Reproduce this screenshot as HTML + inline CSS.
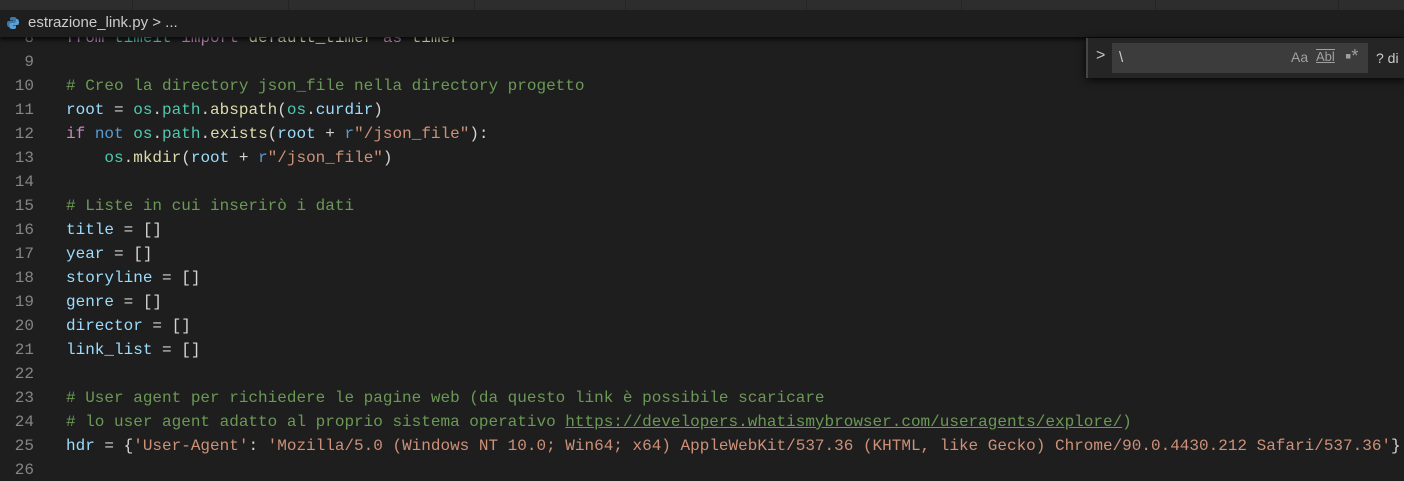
<!DOCTYPE html>
<html><head><meta charset="utf-8"><style>
html,body{margin:0;width:1404px;height:481px;background:#1e1e1e;overflow:hidden}
body{position:relative;font-family:"Liberation Mono",monospace}
.tabs{position:absolute;left:0;top:0;width:1404px;height:10px;background:#2d2d2d}
.tabs i{position:absolute;top:0;width:1px;height:10px;background:#252526}
.bc{position:absolute;left:0;top:10px;width:1404px;height:27px;background:#1e1e1e;font-family:"Liberation Sans",sans-serif;font-size:15px;color:#cccccc;box-shadow:0 3px 4px #000a;z-index:2}
.bc span{position:absolute;left:28px;top:4px}
.code{position:absolute;left:0;top:26px;width:1404px;height:455px;font-size:16px;line-height:24px;white-space:pre;color:#d4d4d4}
.ln{position:absolute;left:0;width:34px;text-align:right;color:#858585}
.l{position:absolute;left:66px}
.k{color:#c586c0}.b{color:#569cd6}.v{color:#9cdcfe}.c{color:#6a9955}.f{color:#dcdcaa}.s{color:#ce9178}.t{color:#4ec9b0}.u{text-decoration:underline}
.find{position:absolute;left:1086px;top:38px;width:318px;height:40px;background:#252526;border-left:2px solid #454545;box-shadow:0 2px 8px #000c;z-index:3;font-family:"Liberation Sans",sans-serif}
.inp{position:absolute;left:24px;top:5px;width:256px;height:30px;background:#3c3c3c}
</style></head><body>
<div class="tabs"><i style="left:132px"></i><i style="left:288px"></i><i style="left:474px"></i><i style="left:625px"></i><i style="left:806px"></i><i style="left:961px"></i><i style="left:1155px"></i><i style="left:1338px"></i></div>
<div class="bc"><svg style="position:absolute;left:6px;top:6px" width="14" height="14" viewBox="0 0 14 14"><path d="M7 1C4 1 4 2 4 3v1.5h3V5H2.5C1 5 1 7 1 8s.5 3 2 3H4V9c0-1 1-2 2-2h3c1 0 1.5-.5 1.5-1.5V3C10.5 2 10 1 7 1z" fill="#3c78aa"/><path d="M7 13c3 0 3-1 3-2V9.5H7V9h4.5C13 9 13 7 13 6s-.5-3-2-3H10v2c0 1-1 2-2 2H5c-1 0-1.5.5-1.5 1.5V11c0 1 .5 2 3.5 2z" fill="#5a9fd4"/></svg><span>estrazione_link.py &gt; ...</span></div>
<div class="code">
<div style="position:absolute;top:0"><span class="ln">8</span><span class="l"><span class="k">from</span> <span class="t">timeit</span> <span class="k">import</span> <span class="f">default_timer</span> <span class="k">as</span> <span class="f">timer</span></span></div>
<div style="position:absolute;top:24px"><span class="ln">9</span></div>
<div style="position:absolute;top:48px"><span class="ln">10</span><span class="l c"># Creo la directory json_file nella directory progetto</span></div>
<div style="position:absolute;top:72px"><span class="ln">11</span><span class="l"><span class="v">root</span> = <span class="t">os</span>.<span class="t">path</span>.<span class="f">abspath</span>(<span class="t">os</span>.<span class="v">curdir</span>)</span></div>
<div style="position:absolute;top:96px"><span class="ln">12</span><span class="l"><span class="k">if</span> <span class="b">not</span> <span class="t">os</span>.<span class="t">path</span>.<span class="f">exists</span>(<span class="v">root</span> + <span class="b">r</span><span class="s">"/json_file"</span>):</span></div>
<div style="position:absolute;top:120px"><span class="ln">13</span><span class="l">    <span class="t">os</span>.<span class="f">mkdir</span>(<span class="v">root</span> + <span class="b">r</span><span class="s">"/json_file"</span>)</span></div>
<div style="position:absolute;top:144px"><span class="ln">14</span></div>
<div style="position:absolute;top:168px"><span class="ln">15</span><span class="l c"># Liste in cui inserirò i dati</span></div>
<div style="position:absolute;top:192px"><span class="ln">16</span><span class="l"><span class="v">title</span> = []</span></div>
<div style="position:absolute;top:216px"><span class="ln">17</span><span class="l"><span class="v">year</span> = []</span></div>
<div style="position:absolute;top:240px"><span class="ln">18</span><span class="l"><span class="v">storyline</span> = []</span></div>
<div style="position:absolute;top:264px"><span class="ln">19</span><span class="l"><span class="v">genre</span> = []</span></div>
<div style="position:absolute;top:288px"><span class="ln">20</span><span class="l"><span class="v">director</span> = []</span></div>
<div style="position:absolute;top:312px"><span class="ln">21</span><span class="l"><span class="v">link_list</span> = []</span></div>
<div style="position:absolute;top:336px"><span class="ln">22</span></div>
<div style="position:absolute;top:360px"><span class="ln">23</span><span class="l c"># User agent per richiedere le pagine web (da questo link è possibile scaricare</span></div>
<div style="position:absolute;top:384px"><span class="ln">24</span><span class="l c"># lo user agent adatto al proprio sistema operativo <span class="u">https://developers.whatismybrowser.com/useragents/explore/</span>)</span></div>
<div style="position:absolute;top:408px"><span class="ln">25</span><span class="l"><span class="v">hdr</span> = {<span class="s">'User-Agent'</span>: <span class="s">'Mozilla/5.0 (Windows NT 10.0; Win64; x64) AppleWebKit/537.36 (KHTML, like Gecko) Chrome/90.0.4430.212 Safari/537.36'</span>}</span></div>
<div style="position:absolute;top:432px"><span class="ln">26</span></div>
</div>
<div class="find">
<span style="position:absolute;left:8px;top:9px;color:#c5c5c5;font-size:16px">&gt;</span>
<div class="inp"><span style="position:absolute;left:7px;top:6px;color:#cccccc;font-size:15px">\</span>
<span style="position:absolute;left:179px;top:6px;color:#a0a0a0;font-size:14px">Aa</span>
<span style="position:absolute;left:204px;top:6px;color:#a0a0a0;font-size:13px;text-decoration:underline;border-top:1px solid #a0a0a0;line-height:14px">Abl</span>
<span style="position:absolute;left:233px;top:3px;color:#a0a0a0;font-size:18px">▪*</span></div>
<span style="position:absolute;left:288px;top:12px;color:#cccccc;font-size:14px">? di</span>
</div>
</body></html>
